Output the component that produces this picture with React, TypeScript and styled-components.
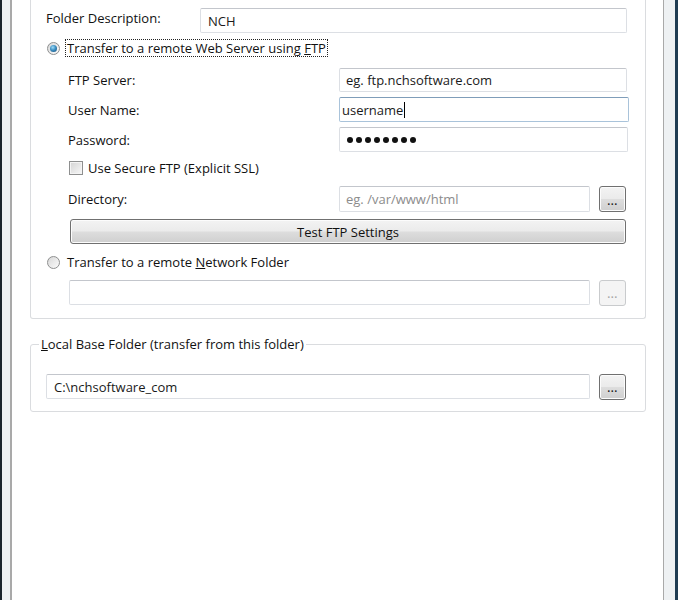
import React from "react";
import styled, { createGlobalStyle } from "styled-components";

const Global = createGlobalStyle`
  html, body { margin: 0; padding: 0; background: #fff; }
  body {
    font-family: "Open Sans", "Noto Sans", sans-serif;
    font-size: 13px;
    color: #111;
  }
`;

const Window = styled.div`
  display: flex;
  width: 678px;
  height: 600px;
  box-sizing: border-box;
  background: #eef1f3;
  border-left: 2px solid #1b242d;
  border-right: 3px solid #1f3c52;
  padding: 0 11px 0 8px;
`;

const ClientArea = styled.div`
  flex: 1;
  display: flex;
  flex-direction: column;
  background: #fff;
  border-left: 2px solid #a9a9a9;
  border-right: 1px solid #a9a9a9;
`;

const OpenGroup = styled.div`
  margin: 0 17px 0 18px;
  padding: 8px 18px 13px 15px;
  border: 1px solid #dadcdf;
  border-top: none;
  border-radius: 0 0 3px 3px;
  display: flex;
  flex-direction: column;
`;

const Fieldset = styled.fieldset`
  margin: 17px 17px 0 18px;
  padding: 0 18px 12px 15px;
  border: 1px solid #dadcdf;
  border-radius: 3px;
  min-inline-size: auto;
`;

const Legend = styled.legend`
  padding: 0 2px;
  margin-left: -7px;
  line-height: 16px;
`;

const Row = styled.div<{ $mt?: number; $indent?: number; $h?: number }>`
  display: flex;
  align-items: center;
  margin-top: ${(p) => p.$mt ?? 0}px;
  padding-left: ${(p) => p.$indent ?? 0}px;
  height: ${(p) => p.$h ?? 25}px;
`;

const Label = styled.span<{ $w: number; $dy?: number }>`
  width: ${(p) => p.$w}px;
  flex: none;
  position: relative;
  top: ${(p) => p.$dy ?? 0}px;
`;

const TextBox = styled.div<{ $focused?: boolean; $pad?: number; $mr?: number }>`
  flex: 1;
  height: 100%;
  box-sizing: border-box;
  display: flex;
  align-items: center;
  padding-left: ${(p) => p.$pad ?? 6}px;
  margin-right: ${(p) => p.$mr ?? 0}px;
  border: 1px solid ${(p) => (p.$focused ? "#a9c3da" : "#dcdfe4")};
  border-top-color: ${(p) => (p.$focused ? "#7f9db9" : "#c3c6cc")};
  border-radius: 2px;
  background: #fff;
  color: #1a1a1a;
  white-space: nowrap;
`;

const Placeholder = styled.span`
  color: #8c8c8c;
`;

const Caret = styled.span`
  display: inline-block;
  width: 1px;
  height: 16px;
  background: #000;
  margin-left: 1px;
`;

const Dots = styled.span`
  display: flex;
  gap: 3px;
  padding-left: 1px;
`;

const Dot = styled.span`
  width: 6px;
  height: 6px;
  border-radius: 50%;
  background: #111;
`;

const EllipsisButton = styled.button<{ $disabled?: boolean }>`
  flex: none;
  width: 27px;
  height: 26px;
  margin-left: 9px;
  margin-right: 1px;
  padding: 7px 0 0;
  box-sizing: border-box;
  border-radius: 3px;
  border: 1px solid ${(p) => (p.$disabled ? "#c9cbcd" : "#707070")};
  background: ${(p) =>
    p.$disabled
      ? "#f4f4f4"
      : "linear-gradient(#f3f3f3 0%, #ebebeb 48%, #dddddd 52%, #cfcfcf 100%)"};
  box-shadow: ${(p) => (p.$disabled ? "none" : "inset 0 0 0 1px #fcfcfc")};
  color: ${(p) => (p.$disabled ? "#a8a8a8" : "#222")};
  font-family: "DejaVu Sans", sans-serif;
  font-size: 8px;
  font-weight: bold;
  letter-spacing: 0.5px;
  line-height: 12px;
  text-align: center;
`;

const WideButton = styled.button`
  display: block;
  height: 25px;
  margin: 7px 1px 0 24px;
  box-sizing: border-box;
  border-radius: 3px;
  border: 1px solid #707070;
  background: linear-gradient(#f3f3f3 0%, #ebebeb 48%, #dddddd 52%, #cfcfcf 100%);
  box-shadow: inset 0 0 0 1px #fcfcfc;
  font-family: inherit;
  font-size: 13px;
  color: #111;
  padding: 0;
`;

const Radio = styled.span<{ $checked?: boolean }>`
  flex: none;
  width: 13px;
  height: 13px;
  box-sizing: border-box;
  border-radius: 50%;
  border: 1px solid #8e8f8f;
  background: linear-gradient(135deg, #d8d8d8, #fbfbfb);
  margin: 0 5px 0 1px;
  display: flex;
  align-items: center;
  justify-content: center;
  &::after {
    content: "";
    display: ${(p) => (p.$checked ? "block" : "none")};
    width: 7px;
    height: 7px;
    border-radius: 50%;
    background: radial-gradient(circle at 40% 35%, #9fdcf8 0%, #3d8fc2 45%, #124a75 100%);
  }
`;

const FocusText = styled.span<{ $focus?: boolean }>`
  padding: 0 1px;
  line-height: 16px;
  border: 1px dotted ${(p) => (p.$focus ? "#222" : "transparent")};
`;

const Check = styled.span`
  flex: none;
  width: 14px;
  height: 14px;
  box-sizing: border-box;
  border: 1px solid #8e8f8f;
  background: linear-gradient(135deg, #d4d4d4, #f8f8f8);
  box-shadow: inset 0 0 0 1px #f4f4f4;
  margin: 0 5px 0 1px;
`;

const U = styled.span`
  text-decoration: underline;
`;

export default function App() {
  return (
    <>
      <Global />
      <Window>
        <ClientArea>
          <OpenGroup>
            <Row $h={25}>
              <Label $w={154} $dy={-3}>Folder Description:</Label>
              <TextBox $pad={7}>NCH</TextBox>
            </Row>

            <Row $mt={6} $h={18}>
              <Radio $checked />
              <FocusText $focus>
                Transfer to a remote Web Server using <U>F</U>TP
              </FocusText>
            </Row>

            <Row $mt={11} $h={24} $indent={22}>
              <Label $w={271}>FTP Server:</Label>
              <TextBox>eg. ftp.nchsoftware.com</TextBox>
            </Row>

            <Row $mt={5} $indent={22}>
              <Label $w={271}>User Name:</Label>
              <TextBox $focused $pad={2} $mr={-2}>
                username
                <Caret />
              </TextBox>
            </Row>

            <Row $mt={5} $indent={22}>
              <Label $w={271}>Password:</Label>
              <TextBox $mr={-1}>
                <Dots>
                  {Array.from({ length: 8 }).map((_, i) => (
                    <Dot key={i} />
                  ))}
                </Dots>
              </TextBox>
            </Row>

            <Row $mt={8} $h={16} $indent={22}>
              <Check />
              <span>Use Secure FTP (Explicit SSL)</span>
            </Row>

            <Row $mt={10} $h={26} $indent={22}>
              <Label $w={271}>Directory:</Label>
              <TextBox>
                <Placeholder>eg. /var/www/html</Placeholder>
              </TextBox>
              <EllipsisButton>...</EllipsisButton>
            </Row>

            <WideButton>Test FTP Settings</WideButton>

            <Row $mt={9} $h={18}>
              <Radio />
              <FocusText>
                Transfer to a remote <U>N</U>etwork Folder
              </FocusText>
            </Row>

            <Row $mt={9} $h={25} $indent={23}>
              <TextBox />
              <EllipsisButton $disabled>...</EllipsisButton>
            </Row>
          </OpenGroup>

          <Fieldset>
            <Legend>
              <U>L</U>ocal Base Folder (transfer from this folder)
            </Legend>
            <Row $mt={22} $h={25}>
              <TextBox $pad={7}>C:\nchsoftware_com</TextBox>
              <EllipsisButton>...</EllipsisButton>
            </Row>
          </Fieldset>
        </ClientArea>
      </Window>
    </>
  );
}
